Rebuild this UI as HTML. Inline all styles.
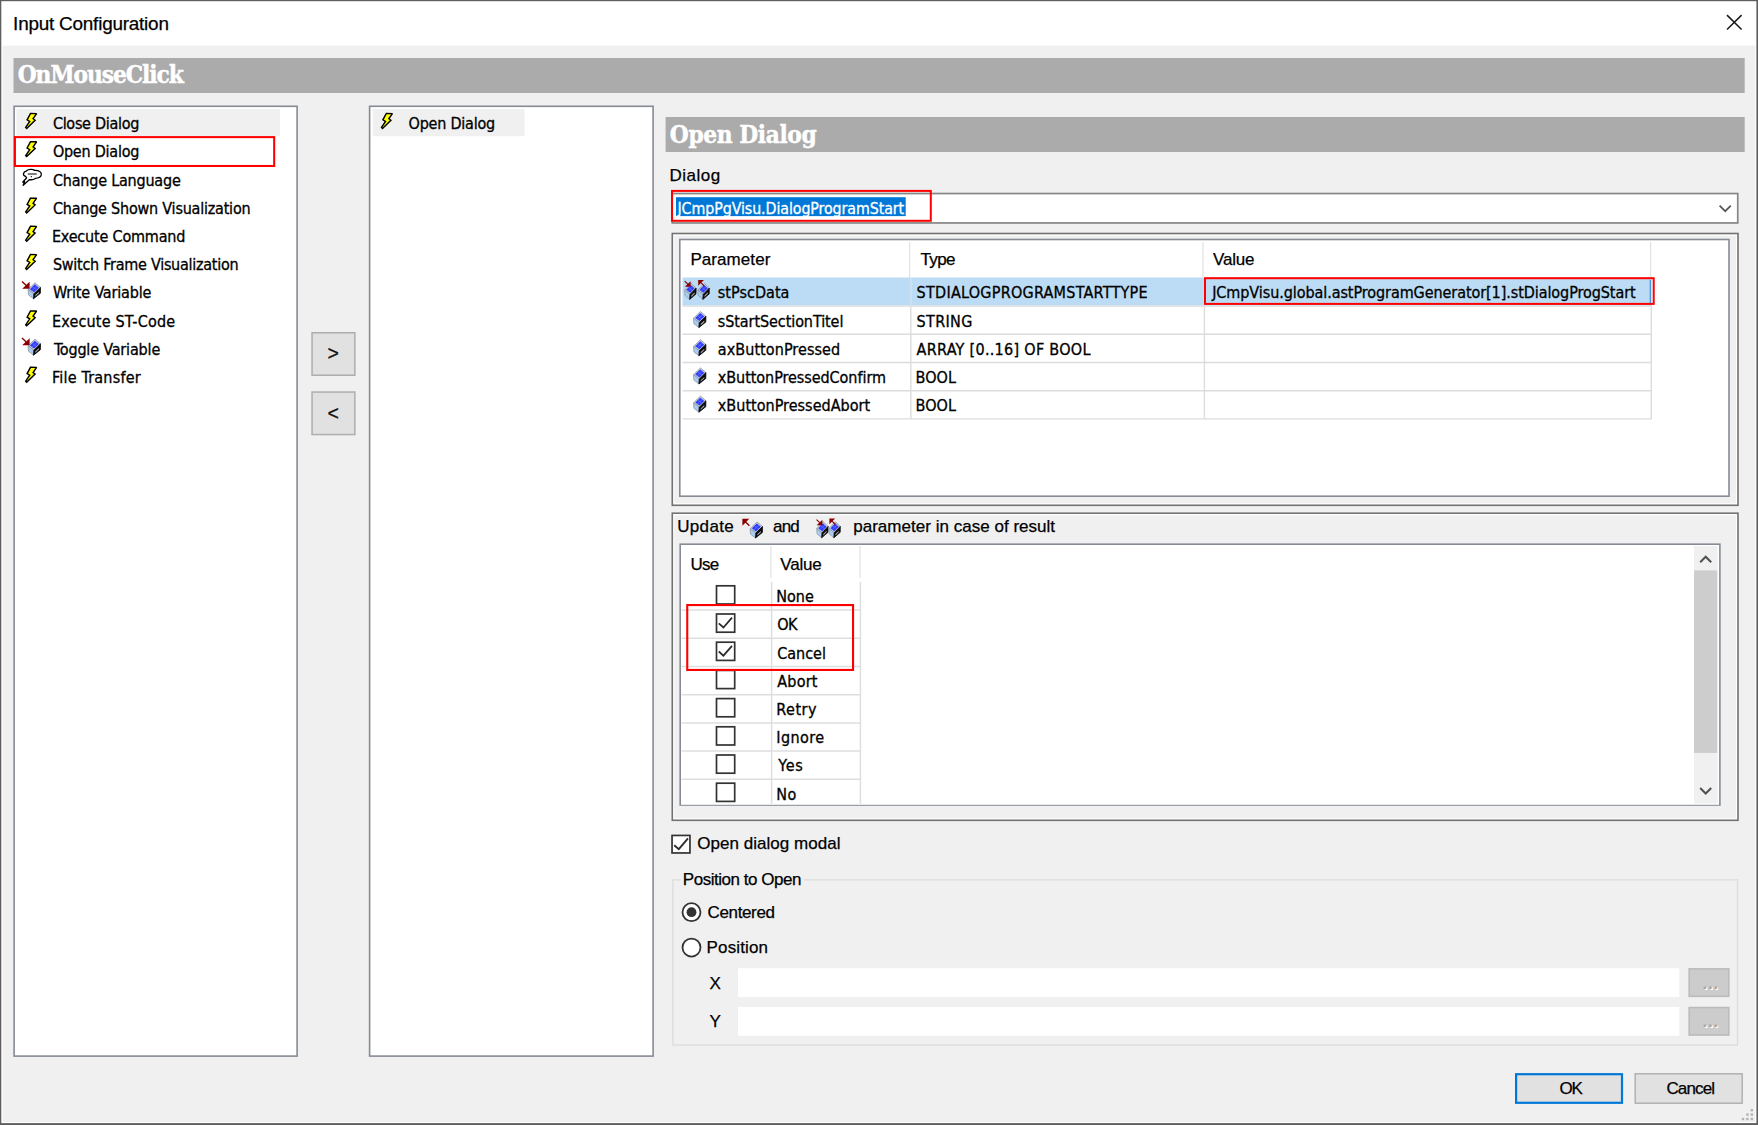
<!DOCTYPE html>
<html lang="en"><head><meta charset="utf-8"><title>Input Configuration</title>
<style>
html,body{margin:0;padding:0;background:#f0f0f0;overflow:hidden}
#w{position:relative;width:1758px;height:1125px;overflow:hidden;background:#f0f0f0}
#w div{position:absolute;box-sizing:border-box}
#w svg{position:absolute;overflow:visible}
.t{position:absolute;white-space:pre}
</style></head><body><div id="w">
<svg width="1758" height="1125" viewBox="0 0 1758 1125" style="left:0;top:0"><defs>
<g id="bolt"><path d="M5.3 0.5 L11.4 0.6 L7.9 5.7 L9.9 7.3 L1.5 15.4 L0.5 14.4 L4.5 8.4 L1.9 6.8 Z" fill="#ffff00" stroke="#000" stroke-width="1.45" stroke-linejoin="miter" stroke-miterlimit="2"/></g>
<g id="cube">
<path d="M7 0.3 L12.5 5 L5.9 11.4 L0.1 7.1 Z" fill="#c4ccd6" stroke="#8e98a6" stroke-width="0.8"/>
<path d="M6.85 1.9 L10.8 5.25 L6.0 9.8 L1.85 6.75 Z" fill="#2f3cff"/>
<path d="M4.3 4.3 L8.5 7.5 M8.9 3.6 L3.9 8.3" stroke="#6a78ff" stroke-width="0.7"/>
<path d="M0.1 7.1 L5.9 11.4 L5.5 16.4 L0.5 12.5 Z" fill="#a9cdf2" stroke="#8e98a6" stroke-width="0.8"/>
<path d="M5.9 11.4 L12.5 5 L12.4 10.9 L5.5 16.4 Z" fill="#0a0a0a" stroke="#0a0a0a" stroke-width="0.8"/>
<path d="M7.3 12.6 L10.9 9.3 L10.9 10.7 L7.3 14 Z" fill="#b0b0b0"/>
</g>
<g id="arrin"><path d="M-7.4 0 L0 0 L0 -7 Z" fill="#8a0000"/><path d="M-7.6 -7.2 L-2 -2" stroke="#8a0000" stroke-width="1.4"/></g>
<g id="arrout"><path d="M0 0 L7.2 0 L0 7.2 Z" fill="#8a0000"/><path d="M2 2 L7.4 7.4" stroke="#8a0000" stroke-width="1.4"/></g>
<g id="bubble"><path d="M3.4 7.2 C0.2 6.2 0.6 2.6 4.4 1.6 C6 0 10.6 -0.2 12.6 1.2 C17 1 20 3.4 19 6 C18.6 8 16 9 13.2 9.2 C11.6 10.4 8.6 10.6 7.4 10.4 L1 16 L2.4 12.4 L0.6 12.8 L4.4 8.8 Z" fill="#fff" stroke="#000" stroke-width="1.3" stroke-linejoin="round"/><path d="M5.6 4.8 L14.6 4.8 M8.6 7.4 L9.6 7.4" stroke="#000" stroke-width="1.1"/></g>
</defs>
<rect x="0" y="0" width="1758" height="1125" fill="#5e5e5e"/>
<rect x="1.3" y="1.2" width="1755.1" height="1121.9" fill="#ffffff"/>
<rect x="2.7" y="45.6" width="1752.6" height="1076.4" fill="#f0f0f0"/>
<path d="M1727 15.1 L1741.6 29.5 M1741.6 15.1 L1727 29.5" stroke="#1a1a1a" stroke-width="1.5" fill="none"/>
<rect x="13.5" y="58" width="1731.2" height="35" fill="#ababab"/>
<rect x="14.1" y="106.3" width="283.0" height="949.8" fill="#ffffff" stroke="#858a94" stroke-width="1.6"/>
<rect x="16.4" y="109" width="263.6" height="27.2" fill="#f0f0f0"/>
<rect x="14.93" y="137.12" width="259.25" height="28.85" fill="none" stroke="#ff0000" stroke-width="2.05"/>
<rect x="312.05" y="332.75" width="42.8" height="42.5" fill="#e1e1e1" stroke="#adadad" stroke-width="1.5"/>
<rect x="312.05" y="392.05" width="42.8" height="42.5" fill="#e1e1e1" stroke="#adadad" stroke-width="1.5"/>
<rect x="369.6" y="106.3" width="283.5" height="949.8" fill="#ffffff" stroke="#858a94" stroke-width="1.6"/>
<rect x="372.8" y="109" width="151.8" height="27.2" fill="#f0f0f0"/>
<rect x="665.6" y="117" width="1079.1" height="35" fill="#ababab"/>
<rect x="672.25" y="193.55" width="1065.5" height="29.4" fill="#ffffff" stroke="#868686" stroke-width="1.7"/>
<rect x="676.0" y="197.2" width="229.7" height="18.9" fill="#0078d7"/>
<rect x="672.0" y="190.9" width="258.8" height="29.9" fill="none" stroke="#ff0000" stroke-width="2.0"/>
<path d="M1719.6 205.6 L1725.2 211.2 L1730.8 205.6" stroke="#585858" stroke-width="1.7" fill="none"/>
<rect x="673.65" y="234.85" width="1063.0" height="269.1" fill="none" stroke="#ffffff" stroke-width="1.3"/>
<rect x="672.3" y="233.5" width="1065.7" height="271.8" fill="none" stroke="#727272" stroke-width="1.6"/>
<rect x="679.8" y="239.5" width="1049.2" height="256.7" fill="#ffffff" stroke="#858a94" stroke-width="1.6"/>
<line x1="909.6" y1="242" x2="909.6" y2="277" stroke="#e3e3e3" stroke-width="1.3"/>
<line x1="1203.0" y1="242" x2="1203.0" y2="277" stroke="#e3e3e3" stroke-width="1.3"/>
<line x1="1650.6" y1="242" x2="1650.6" y2="277" stroke="#e3e3e3" stroke-width="1.3"/>
<rect x="682.5" y="277.5" width="968.9" height="28.1" fill="#bcdcf5"/>
<line x1="682.5" y1="306.1" x2="1651.5" y2="306.1" stroke="#dcdcdc" stroke-width="1.4"/>
<line x1="682.5" y1="334.3" x2="1651.5" y2="334.3" stroke="#dcdcdc" stroke-width="1.4"/>
<line x1="682.5" y1="362.5" x2="1651.5" y2="362.5" stroke="#dcdcdc" stroke-width="1.4"/>
<line x1="682.5" y1="390.7" x2="1651.5" y2="390.7" stroke="#dcdcdc" stroke-width="1.4"/>
<line x1="682.5" y1="418.9" x2="1651.5" y2="418.9" stroke="#dcdcdc" stroke-width="1.4"/>
<line x1="910.8" y1="305.6" x2="910.8" y2="418.9" stroke="#dcdcdc" stroke-width="1.4"/>
<line x1="910.8" y1="277.5" x2="910.8" y2="305.6" stroke="#cfe4f6" stroke-width="1.3"/>
<line x1="1204.4" y1="305.6" x2="1204.4" y2="418.9" stroke="#dcdcdc" stroke-width="1.4"/>
<line x1="1204.4" y1="277.5" x2="1204.4" y2="305.6" stroke="#cfe4f6" stroke-width="1.3"/>
<line x1="1651.3" y1="305.6" x2="1651.3" y2="418.9" stroke="#dcdcdc" stroke-width="1.4"/>
<line x1="1651.3" y1="277.5" x2="1651.3" y2="305.6" stroke="#cfe4f6" stroke-width="1.3"/>
<rect x="1205.0" y="278.2" width="448.7" height="25.7" fill="none" stroke="#ff0000" stroke-width="2.0"/>
<line x1="1650.3" y1="280" x2="1650.3" y2="303" stroke="#3a8ee0" stroke-width="1.2"/>
<rect x="673.65" y="514.55" width="1063.0" height="304.4" fill="none" stroke="#ffffff" stroke-width="1.3"/>
<rect x="672.3" y="513.2" width="1065.7" height="307.1" fill="none" stroke="#727272" stroke-width="1.6"/>
<rect x="680.2" y="544.2" width="1039.7" height="260.8" fill="#ffffff" stroke="#858a94" stroke-width="1.6"/>
<line x1="770.9" y1="546" x2="770.9" y2="578" stroke="#e3e3e3" stroke-width="1.3"/>
<line x1="860.0" y1="546" x2="860.0" y2="578" stroke="#e3e3e3" stroke-width="1.3"/>
<line x1="681.5" y1="610.1" x2="860.8" y2="610.1" stroke="#dedede" stroke-width="1.5"/>
<line x1="681.5" y1="638.3" x2="860.8" y2="638.3" stroke="#dedede" stroke-width="1.5"/>
<line x1="681.5" y1="666.5" x2="860.8" y2="666.5" stroke="#dedede" stroke-width="1.5"/>
<line x1="681.5" y1="694.7" x2="860.8" y2="694.7" stroke="#dedede" stroke-width="1.5"/>
<line x1="681.5" y1="722.9" x2="860.8" y2="722.9" stroke="#dedede" stroke-width="1.5"/>
<line x1="681.5" y1="751.1" x2="860.8" y2="751.1" stroke="#dedede" stroke-width="1.5"/>
<line x1="681.5" y1="779.3" x2="860.8" y2="779.3" stroke="#dedede" stroke-width="1.5"/>
<line x1="771.6" y1="581.9" x2="771.6" y2="804.8" stroke="#dedede" stroke-width="1.5"/>
<line x1="860.4" y1="581.9" x2="860.4" y2="804.8" stroke="#dedede" stroke-width="1.5"/>
<rect x="716.5" y="585.8" width="18.2" height="18.2" fill="#fff" stroke="#333" stroke-width="1.7"/>
<rect x="716.5" y="614.0" width="18.2" height="18.2" fill="#fff" stroke="#333" stroke-width="1.7"/>
<path d="M718.8 623.3 L723.4 627.5 L732.0 617.7" stroke="#2b2b2b" stroke-width="1.75" fill="none"/>
<rect x="716.5" y="642.2" width="18.2" height="18.2" fill="#fff" stroke="#333" stroke-width="1.7"/>
<path d="M718.8 651.5 L723.4 655.7 L732.0 645.9" stroke="#2b2b2b" stroke-width="1.75" fill="none"/>
<rect x="716.5" y="670.4" width="18.2" height="18.2" fill="#fff" stroke="#333" stroke-width="1.7"/>
<rect x="716.5" y="698.6" width="18.2" height="18.2" fill="#fff" stroke="#333" stroke-width="1.7"/>
<rect x="716.5" y="726.8" width="18.2" height="18.2" fill="#fff" stroke="#333" stroke-width="1.7"/>
<rect x="716.5" y="755.0" width="18.2" height="18.2" fill="#fff" stroke="#333" stroke-width="1.7"/>
<rect x="716.5" y="783.2" width="18.2" height="18.2" fill="#fff" stroke="#333" stroke-width="1.7"/>
<rect x="681" y="804.2" width="1038" height="0.75" fill="#ffffff"/>
<rect x="687.25" y="605.05" width="165.8" height="64.9" fill="none" stroke="#ff0000" stroke-width="2.1"/>
<rect x="1694" y="546" width="23.6" height="257.6" fill="#f0f0f0"/>
<rect x="1694" y="570.4" width="23.2" height="182.5" fill="#cdcdcd"/>
<path d="M1700.2 562.2 L1705.7 556.7 L1711.2 562.2" stroke="#505050" stroke-width="2" fill="none"/>
<path d="M1700.2 788 L1705.7 793.5 L1711.2 788" stroke="#505050" stroke-width="2" fill="none"/>
<rect x="672.05" y="835.45" width="17.9" height="17.5" fill="#ffffff" stroke="#333333" stroke-width="1.7"/>
<path d="M674.2 845.2 L678.8 849.2 L688.0 838.4" stroke="#2b2b2b" stroke-width="1.8" fill="none"/>
<rect x="672.85" y="879.85" width="1064.7" height="165.2" fill="none" stroke="#dcdcdc" stroke-width="1.3"/>
<rect x="680.5" y="877" width="123.5" height="6" fill="#f0f0f0"/>
<circle cx="691.5" cy="912.2" r="9.0" fill="#fff" stroke="#333" stroke-width="1.8"/>
<circle cx="691.5" cy="912.2" r="4.9" fill="#333"/>
<circle cx="691.5" cy="947.6" r="9.0" fill="#fff" stroke="#333" stroke-width="1.8"/>
<rect x="738" y="968.2" width="941.3" height="28.9" fill="#ffffff"/>
<rect x="738" y="1006.9" width="941.3" height="28.9" fill="#ffffff"/>
<rect x="1689.15" y="968.85" width="39.7" height="27.5" fill="#cccccc" stroke="#bababa" stroke-width="1.5"/>
<rect x="1689.15" y="1007.55" width="39.7" height="27.5" fill="#cccccc" stroke="#bababa" stroke-width="1.5"/>
<rect x="1516.1" y="1074.2" width="105.9" height="28.6" fill="#e1e1e1" stroke="#0078d7" stroke-width="2.2"/>
<rect x="1635.2" y="1073.8" width="107.0" height="29.4" fill="#e1e1e1" stroke="#adadad" stroke-width="1.4"/>
<rect x="1750.6" y="1109.0" width="2.4" height="2.4" fill="#b4b4b4"/>
<rect x="1746.2" y="1113.3999999999999" width="2.4" height="2.4" fill="#b4b4b4"/>
<rect x="1750.6" y="1113.3999999999999" width="2.4" height="2.4" fill="#b4b4b4"/>
<rect x="1741.8" y="1117.8" width="2.4" height="2.4" fill="#b4b4b4"/>
<rect x="1746.2" y="1117.8" width="2.4" height="2.4" fill="#b4b4b4"/>
<rect x="1750.6" y="1117.8" width="2.4" height="2.4" fill="#b4b4b4"/>
<use href="#bolt" x="25.2" y="113.0"/>
<use href="#bolt" x="25.2" y="141.2"/>
<use href="#bubble" x="22.2" y="169.2"/>
<use href="#bolt" x="25.2" y="197.6"/>
<use href="#bolt" x="25.2" y="225.8"/>
<use href="#bolt" x="25.2" y="254.0"/>
<use href="#cube" x="28.0" y="282.4"/>
<use href="#arrin" x="29.6" y="288.8"/>
<use href="#bolt" x="25.2" y="310.4"/>
<use href="#cube" x="28.0" y="338.8"/>
<use href="#arrin" x="29.6" y="345.2"/>
<use href="#bolt" x="25.2" y="366.8"/>
<use href="#bolt" x="381.0" y="113.0"/>
<use href="#cube" transform="translate(684.6 283.0) scale(0.92 1.0)"/>
<use href="#arrin" transform="translate(690.6 286.8) scale(0.78 0.78)"/>
<use href="#cube" transform="translate(697.8 283.0) scale(0.92 1.0)"/>
<use href="#arrout" transform="translate(698.2 280.0) scale(0.8 0.8)"/>
<use href="#cube" x="693.4" y="311.2"/>
<use href="#cube" x="693.4" y="339.4"/>
<use href="#cube" x="693.4" y="367.6"/>
<use href="#cube" x="693.4" y="395.8"/>
<use href="#arrout" transform="translate(742.4 518.8) scale(0.95 0.95)"/>
<use href="#cube" x="750.0" y="521.6"/>
<use href="#cube" transform="translate(816.6 521.4) scale(0.92 1.0)"/>
<use href="#arrin" transform="translate(822.4 525.2) scale(0.78 0.78)"/>
<use href="#cube" transform="translate(828.8 521.4) scale(0.92 1.0)"/>
<use href="#arrout" transform="translate(829.4 518.6) scale(0.8 0.8)"/></svg>

<span class="t" style="left:13.10px;top:10.65px;font-family:'Liberation Sans', 'DejaVu Sans', sans-serif;font-size:18.9px;line-height:25px;color:#000;letter-spacing:-0.212px;-webkit-text-stroke:0.25px;">Input Configuration</span>
<span class="t" style="left:17.70px;top:59.39px;font-family:'DejaVu Serif Condensed', 'Liberation Serif', serif;font-size:24.2px;line-height:31px;color:#ffffff;font-weight:bold;letter-spacing:-1.029px;-webkit-text-stroke:0.45px;">OnMouseClick</span>
<span class="t" style="left:669.80px;top:118.69px;font-family:'DejaVu Serif Condensed', 'Liberation Serif', serif;font-size:24.2px;line-height:31px;color:#ffffff;font-weight:bold;letter-spacing:-0.373px;-webkit-text-stroke:0.45px;">Open Dialog</span>
<span class="t" style="left:52.90px;top:113.16px;font-family:'DejaVu Sans Condensed', 'Liberation Sans', sans-serif;font-size:16.0px;line-height:21px;color:#000;letter-spacing:-0.291px;-webkit-text-stroke:0.3px;">Close Dialog</span>
<span class="t" style="left:52.90px;top:141.36px;font-family:'DejaVu Sans Condensed', 'Liberation Sans', sans-serif;font-size:16.0px;line-height:21px;color:#000;letter-spacing:-0.243px;-webkit-text-stroke:0.3px;">Open Dialog</span>
<span class="t" style="left:52.90px;top:169.56px;font-family:'DejaVu Sans Condensed', 'Liberation Sans', sans-serif;font-size:16.0px;line-height:21px;color:#000;letter-spacing:-0.206px;-webkit-text-stroke:0.3px;">Change Language</span>
<span class="t" style="left:52.90px;top:197.76px;font-family:'DejaVu Sans Condensed', 'Liberation Sans', sans-serif;font-size:16.0px;line-height:21px;color:#000;letter-spacing:-0.216px;-webkit-text-stroke:0.3px;">Change Shown Visualization</span>
<span class="t" style="left:51.90px;top:225.96px;font-family:'DejaVu Sans Condensed', 'Liberation Sans', sans-serif;font-size:16.0px;line-height:21px;color:#000;letter-spacing:-0.181px;-webkit-text-stroke:0.3px;">Execute Command</span>
<span class="t" style="left:52.90px;top:254.16px;font-family:'DejaVu Sans Condensed', 'Liberation Sans', sans-serif;font-size:16.0px;line-height:21px;color:#000;letter-spacing:-0.265px;-webkit-text-stroke:0.3px;">Switch Frame Visualization</span>
<span class="t" style="left:52.90px;top:282.36px;font-family:'DejaVu Sans Condensed', 'Liberation Sans', sans-serif;font-size:16.0px;line-height:21px;color:#000;letter-spacing:-0.169px;-webkit-text-stroke:0.3px;">Write Variable</span>
<span class="t" style="left:51.90px;top:310.56px;font-family:'DejaVu Sans Condensed', 'Liberation Sans', sans-serif;font-size:16.0px;line-height:21px;color:#000;letter-spacing:0.190px;-webkit-text-stroke:0.3px;">Execute ST-Code</span>
<span class="t" style="left:53.90px;top:338.76px;font-family:'DejaVu Sans Condensed', 'Liberation Sans', sans-serif;font-size:16.0px;line-height:21px;color:#000;letter-spacing:-0.170px;-webkit-text-stroke:0.3px;">Toggle Variable</span>
<span class="t" style="left:51.90px;top:366.96px;font-family:'DejaVu Sans Condensed', 'Liberation Sans', sans-serif;font-size:16.0px;line-height:21px;color:#000;letter-spacing:0.220px;-webkit-text-stroke:0.3px;">File Transfer</span>
<span class="t" style="left:408.60px;top:113.16px;font-family:'DejaVu Sans Condensed', 'Liberation Sans', sans-serif;font-size:16.0px;line-height:21px;color:#000;letter-spacing:-0.233px;-webkit-text-stroke:0.3px;">Open Dialog</span>
<span class="t" style="left:327.60px;top:341.24px;font-family:'Liberation Sans', 'DejaVu Sans', sans-serif;font-size:19.5px;line-height:25px;color:#111;-webkit-text-stroke:0.25px;">&gt;</span>
<span class="t" style="left:327.60px;top:400.54px;font-family:'Liberation Sans', 'DejaVu Sans', sans-serif;font-size:19.5px;line-height:25px;color:#111;-webkit-text-stroke:0.25px;">&lt;</span>
<span class="t" style="left:669.60px;top:165.01px;font-family:'Liberation Sans', 'DejaVu Sans', sans-serif;font-size:17.0px;line-height:22px;color:#000;letter-spacing:0.472px;-webkit-text-stroke:0.25px;">Dialog</span>
<span class="t" style="left:677.50px;top:197.63px;font-family:'DejaVu Sans Condensed', 'Liberation Sans', sans-serif;font-size:15.8px;line-height:21px;color:#ffffff;letter-spacing:-0.073px;-webkit-text-stroke:0.3px;">JCmpPgVisu.DialogProgramStart</span>
<span class="t" style="left:690.40px;top:249.41px;font-family:'Liberation Sans', 'DejaVu Sans', sans-serif;font-size:17.0px;line-height:22px;color:#000;letter-spacing:0.075px;-webkit-text-stroke:0.25px;">Parameter</span>
<span class="t" style="left:920.40px;top:249.41px;font-family:'Liberation Sans', 'DejaVu Sans', sans-serif;font-size:17.0px;line-height:22px;color:#000;letter-spacing:-0.600px;-webkit-text-stroke:0.25px;">Type</span>
<span class="t" style="left:1213.00px;top:249.41px;font-family:'Liberation Sans', 'DejaVu Sans', sans-serif;font-size:17.0px;line-height:22px;color:#000;letter-spacing:-0.191px;-webkit-text-stroke:0.25px;">Value</span>
<span class="t" style="left:717.80px;top:282.36px;font-family:'DejaVu Sans Condensed', 'Liberation Sans', sans-serif;font-size:16.0px;line-height:21px;color:#000;letter-spacing:0.038px;-webkit-text-stroke:0.3px;">stPscData</span>
<span class="t" style="left:717.80px;top:310.56px;font-family:'DejaVu Sans Condensed', 'Liberation Sans', sans-serif;font-size:16.0px;line-height:21px;color:#000;letter-spacing:-0.079px;-webkit-text-stroke:0.3px;">sStartSectionTitel</span>
<span class="t" style="left:717.80px;top:338.76px;font-family:'DejaVu Sans Condensed', 'Liberation Sans', sans-serif;font-size:16.0px;line-height:21px;color:#000;letter-spacing:0.070px;-webkit-text-stroke:0.3px;">axButtonPressed</span>
<span class="t" style="left:717.80px;top:366.96px;font-family:'DejaVu Sans Condensed', 'Liberation Sans', sans-serif;font-size:16.0px;line-height:21px;color:#000;letter-spacing:-0.052px;-webkit-text-stroke:0.3px;">xButtonPressedConfirm</span>
<span class="t" style="left:717.80px;top:395.16px;font-family:'DejaVu Sans Condensed', 'Liberation Sans', sans-serif;font-size:16.0px;line-height:21px;color:#000;letter-spacing:0.025px;-webkit-text-stroke:0.3px;">xButtonPressedAbort</span>
<span class="t" style="left:916.60px;top:282.36px;font-family:'DejaVu Sans Condensed', 'Liberation Sans', sans-serif;font-size:16.0px;line-height:21px;color:#000;letter-spacing:0.259px;-webkit-text-stroke:0.3px;">STDIALOGPROGRAMSTARTTYPE</span>
<span class="t" style="left:916.60px;top:310.56px;font-family:'DejaVu Sans Condensed', 'Liberation Sans', sans-serif;font-size:16.0px;line-height:21px;color:#000;letter-spacing:0.333px;-webkit-text-stroke:0.3px;">STRING</span>
<span class="t" style="left:916.60px;top:338.76px;font-family:'DejaVu Sans Condensed', 'Liberation Sans', sans-serif;font-size:16.0px;line-height:21px;color:#000;letter-spacing:0.295px;-webkit-text-stroke:0.3px;">ARRAY [0..16] OF BOOL</span>
<span class="t" style="left:915.60px;top:366.96px;font-family:'DejaVu Sans Condensed', 'Liberation Sans', sans-serif;font-size:16.0px;line-height:21px;color:#000;letter-spacing:0.017px;-webkit-text-stroke:0.3px;">BOOL</span>
<span class="t" style="left:915.60px;top:395.16px;font-family:'DejaVu Sans Condensed', 'Liberation Sans', sans-serif;font-size:16.0px;line-height:21px;color:#000;letter-spacing:0.017px;-webkit-text-stroke:0.3px;">BOOL</span>
<span class="t" style="left:1212.20px;top:282.36px;font-family:'DejaVu Sans Condensed', 'Liberation Sans', sans-serif;font-size:16.0px;line-height:21px;color:#000;letter-spacing:-0.071px;-webkit-text-stroke:0.3px;">JCmpVisu.global.astProgramGenerator[1].stDialogProgStart</span>
<span class="t" style="left:677.20px;top:515.71px;font-family:'Liberation Sans', 'DejaVu Sans', sans-serif;font-size:17.0px;line-height:22px;color:#000;letter-spacing:0.347px;-webkit-text-stroke:0.25px;">Update</span>
<span class="t" style="left:773.00px;top:515.71px;font-family:'Liberation Sans', 'DejaVu Sans', sans-serif;font-size:17.0px;line-height:22px;color:#000;letter-spacing:-0.805px;-webkit-text-stroke:0.25px;">and</span>
<span class="t" style="left:853.20px;top:515.71px;font-family:'Liberation Sans', 'DejaVu Sans', sans-serif;font-size:17.0px;line-height:22px;color:#000;letter-spacing:0.025px;-webkit-text-stroke:0.25px;">parameter in case of result</span>
<span class="t" style="left:690.40px;top:553.51px;font-family:'Liberation Sans', 'DejaVu Sans', sans-serif;font-size:17.0px;line-height:22px;color:#000;letter-spacing:-0.738px;-webkit-text-stroke:0.25px;">Use</span>
<span class="t" style="left:780.30px;top:553.51px;font-family:'Liberation Sans', 'DejaVu Sans', sans-serif;font-size:17.0px;line-height:22px;color:#000;letter-spacing:-0.191px;-webkit-text-stroke:0.25px;">Value</span>
<span class="t" style="left:776.30px;top:586.16px;font-family:'DejaVu Sans Condensed', 'Liberation Sans', sans-serif;font-size:16.0px;line-height:21px;color:#000;-webkit-text-stroke:0.3px;">None</span>
<span class="t" style="left:777.30px;top:614.36px;font-family:'DejaVu Sans Condensed', 'Liberation Sans', sans-serif;font-size:16.0px;line-height:21px;color:#000;letter-spacing:-0.728px;-webkit-text-stroke:0.3px;">OK</span>
<span class="t" style="left:777.30px;top:642.56px;font-family:'DejaVu Sans Condensed', 'Liberation Sans', sans-serif;font-size:16.0px;line-height:21px;color:#000;letter-spacing:-0.035px;-webkit-text-stroke:0.3px;">Cancel</span>
<span class="t" style="left:777.30px;top:670.76px;font-family:'DejaVu Sans Condensed', 'Liberation Sans', sans-serif;font-size:16.0px;line-height:21px;color:#000;letter-spacing:0.199px;-webkit-text-stroke:0.3px;">Abort</span>
<span class="t" style="left:776.30px;top:698.96px;font-family:'DejaVu Sans Condensed', 'Liberation Sans', sans-serif;font-size:16.0px;line-height:21px;color:#000;letter-spacing:0.501px;-webkit-text-stroke:0.3px;">Retry</span>
<span class="t" style="left:776.30px;top:727.16px;font-family:'DejaVu Sans Condensed', 'Liberation Sans', sans-serif;font-size:16.0px;line-height:21px;color:#000;letter-spacing:0.425px;-webkit-text-stroke:0.3px;">Ignore</span>
<span class="t" style="left:778.30px;top:755.36px;font-family:'DejaVu Sans Condensed', 'Liberation Sans', sans-serif;font-size:16.0px;line-height:21px;color:#000;letter-spacing:0.738px;-webkit-text-stroke:0.3px;">Yes</span>
<span class="t" style="left:776.30px;top:783.56px;font-family:'DejaVu Sans Condensed', 'Liberation Sans', sans-serif;font-size:16.0px;line-height:21px;color:#000;letter-spacing:0.334px;-webkit-text-stroke:0.3px;">No</span>
<span class="t" style="left:697.20px;top:833.21px;font-family:'Liberation Sans', 'DejaVu Sans', sans-serif;font-size:17.0px;line-height:22px;color:#000;letter-spacing:0.042px;-webkit-text-stroke:0.25px;">Open dialog modal</span>
<span class="t" style="left:682.80px;top:869.01px;font-family:'Liberation Sans', 'DejaVu Sans', sans-serif;font-size:17.0px;line-height:22px;color:#000;letter-spacing:-0.476px;-webkit-text-stroke:0.25px;">Position to Open</span>
<span class="t" style="left:707.60px;top:901.81px;font-family:'Liberation Sans', 'DejaVu Sans', sans-serif;font-size:17.0px;line-height:22px;color:#000;letter-spacing:-0.368px;-webkit-text-stroke:0.25px;">Centered</span>
<span class="t" style="left:706.60px;top:937.41px;font-family:'Liberation Sans', 'DejaVu Sans', sans-serif;font-size:17.0px;line-height:22px;color:#000;letter-spacing:0.125px;-webkit-text-stroke:0.25px;">Position</span>
<span class="t" style="left:709.60px;top:972.71px;font-family:'Liberation Sans', 'DejaVu Sans', sans-serif;font-size:17.0px;line-height:22px;color:#000;-webkit-text-stroke:0.25px;">X</span>
<span class="t" style="left:709.60px;top:1011.01px;font-family:'Liberation Sans', 'DejaVu Sans', sans-serif;font-size:17.0px;line-height:22px;color:#000;-webkit-text-stroke:0.25px;">Y</span>
<span class="t" style="left:1702.60px;top:972.61px;font-family:'Liberation Sans', 'DejaVu Sans', sans-serif;font-size:17px;line-height:22px;color:#b0a8a0;font-weight:bold;letter-spacing:0.677px;text-shadow:1.2px 1.2px 0 #ffffff;">...</span>
<span class="t" style="left:1702.60px;top:1011.31px;font-family:'Liberation Sans', 'DejaVu Sans', sans-serif;font-size:17px;line-height:22px;color:#b0a8a0;font-weight:bold;letter-spacing:0.677px;text-shadow:1.2px 1.2px 0 #ffffff;">...</span>
<span class="t" style="left:1559.50px;top:1078.11px;font-family:'Liberation Sans', 'DejaVu Sans', sans-serif;font-size:17.0px;line-height:22px;color:#000;letter-spacing:-1.200px;-webkit-text-stroke:0.25px;">OK</span>
<span class="t" style="left:1666.40px;top:1078.11px;font-family:'Liberation Sans', 'DejaVu Sans', sans-serif;font-size:17.0px;line-height:22px;color:#000;letter-spacing:-0.848px;-webkit-text-stroke:0.25px;">Cancel</span>
</div></body></html>
